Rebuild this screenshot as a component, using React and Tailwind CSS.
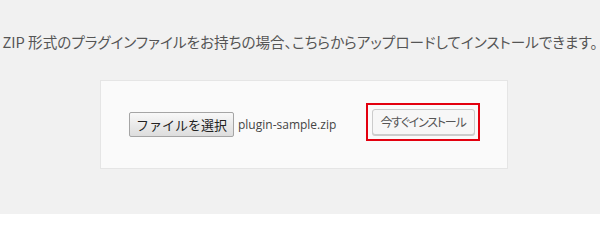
export default function App() {
  return (
    <div className="w-[600px] h-[214px] bg-[#f1f1f1] overflow-hidden font-['Noto_Sans_CJK_JP','Noto_Sans',sans-serif] [font-feature-settings:'palt']">
      <p className="pt-[33px] text-center text-[14.6px] leading-[18px] text-[#555] whitespace-nowrap">
        ZIP 形式のプラグインファイルをお持ちの場合、こちらからアップロードしてインストールできます。
      </p>
      <div className="flex pl-[100px] mt-[29px]">
        <div className="w-[408px] h-[89px] bg-[#fafafa] border border-[#e5e5e5] flex justify-between items-start pl-[28px] pr-[27px] pt-[22px]">
          <div className="flex items-center mt-[9px]">
            <div className="w-[105px] h-[25px] flex items-center justify-center rounded-[2px] border border-[#a5a5a5] bg-gradient-to-b from-[#f8f8f8] to-[#dddddd] text-[13px] text-[#222] whitespace-nowrap [font-feature-settings:normal]">
              ファイルを選択
            </div>
            <span className="ml-[4px] text-[12px] text-[#444] font-['Open_Sans',sans-serif] whitespace-nowrap">plugin-sample.zip</span>
          </div>
          <div className="w-[114px] h-[38px] border-2 border-[#e3000f] flex items-center justify-center">
            <div className="w-[103px] h-[26px] flex items-center justify-center rounded-[3px] border border-[#cccccc] bg-[#f7f7f7] shadow-[0_1px_0_#cccccc] text-[12px] tracking-[-1.2px] text-[#555] whitespace-nowrap">
              今すぐインストール
            </div>
          </div>
        </div>
      </div>
    </div>
  );
}
